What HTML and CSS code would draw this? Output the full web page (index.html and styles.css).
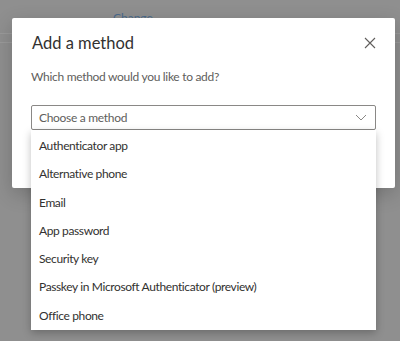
FILE: index.html
```html
<!DOCTYPE html>
<html lang="en">
<head>
<meta charset="UTF-8">
<meta name="viewport" content="width=device-width, initial-scale=1.0">
<title>Add a method</title>
<link rel="stylesheet" href="styles.css">
</head>
<body class="page">

<div class="backdrop">
    <div class="back-row"><span class="back-link">Change</span></div>
    <div class="back-line"></div>
</div>

<div class="dialog">
    <div class="dialog-head">
        <h2 class="dialog-title">Add a method</h2>
        <button class="close" aria-label="Close">
            <svg width="12" height="12" viewBox="0 0 12 12"><path d="M1 1 L11 11 M11 1 L1 11" stroke="#605e5c" stroke-width="1.1" fill="none"/></svg>
        </button>
    </div>
    <p class="dialog-text">Which method would you like to add?</p>
    <div class="select">
        <span class="placeholder">Choose a method</span>
        <svg class="chevron" width="12" height="7" viewBox="0 0 12 7"><path d="M1 1 L6 6 L11 1" stroke="#8a8886" stroke-width="1" fill="none"/></svg>
    </div>
</div>

<ul class="options">
    <li class="option">Authenticator app</li>
    <li class="option">Alternative phone</li>
    <li class="option">Email</li>
    <li class="option">App password</li>
    <li class="option">Security key</li>
    <li class="option">Passkey in Microsoft Authenticator (preview)</li>
    <li class="option">Office phone</li>
</ul>

</body>
</html>
```

FILE: styles.css
```css
.page {
    margin: 0;
    width: 400px;
    height: 341px;
    overflow: hidden;
    background-color: #8f8f8f;
    font-family: Lato, "Open Sans", sans-serif;
    color: #323130;
}

.backdrop {
    height: 341px;
}

.back-row {
    height: 34px;
    padding-left: 113px;
    border-bottom: 1px solid #9a9a9a;
    box-sizing: border-box;
}

.back-link {
    display: inline-block;
    padding-top: 10px;
    font-size: 12px;
    color: #4a6a8c;
}

.back-line {
    margin-top: 8px;
    border-bottom: 1px solid #9a9a9a;
}

/* modal sits over the page */
.dialog {
    position: absolute;
    top: 18px;
    left: 12px;
    width: 383px;
    height: 170px;
    box-sizing: border-box;
    padding: 0 19px;
    background-color: #fff;
    border-radius: 2px;
    box-shadow: 0 6px 20px rgba(0, 0, 0, 0.2);
}

.dialog-head {
    display: flex;
    justify-content: space-between;
    align-items: center;
    height: 50px;
}

.dialog-title {
    margin: 0;
    padding-left: 1px;
    font-size: 16.5px;
    font-weight: 400;
}

.close {
    border: none;
    background: none;
    padding: 0;
    margin-right: -1px;
    width: 14px;
    height: 14px;
    display: flex;
    align-items: center;
    justify-content: center;
}

.dialog-text {
    margin: 0;
    height: 37px;
    line-height: 17px;
    font-size: 12px;
    letter-spacing: -0.3px;
    color: #605e5c;
}

.select {
    display: flex;
    justify-content: space-between;
    align-items: center;
    height: 25px;
    box-sizing: border-box;
    padding: 0 7px;
    border: 1px solid #8a8886;
    border-radius: 2px;
}

.placeholder {
    font-size: 12px;
    letter-spacing: -0.3px;
    color: #605e5c;
}

.chevron {
    margin-right: 1px;
}

/* dropdown list drops below the select, over the dialog edge */
.options {
    position: absolute;
    top: 130px;
    left: 31px;
    width: 345px;
    margin: 0;
    padding: 2px 0 0;
    list-style: none;
    background-color: #fff;
    box-shadow: 0 3px 8px rgba(0, 0, 0, 0.25);
}

.option {
    height: 28.3px;
    line-height: 28.3px;
    padding-left: 8px;
    font-size: 12px;
    letter-spacing: -0.38px;
    color: #323130;
}
```
